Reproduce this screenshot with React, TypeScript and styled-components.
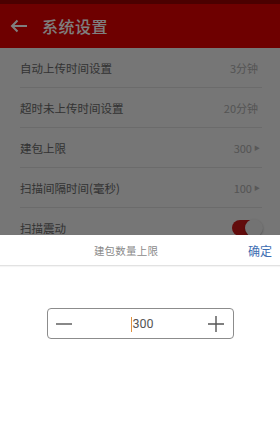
import React from "react";
import styled, { createGlobalStyle } from "styled-components";

const Global = createGlobalStyle`
  html, body { margin: 0; padding: 0; }
  body { font-family: "Noto Sans CJK SC", "Noto Sans", sans-serif; width: 280px; height: 446px; overflow: hidden; }
`;

const Page = styled.div`
  position: relative;
  width: 280px;
  height: 446px;
  background: #ececec;
  overflow: hidden;
`;

const StatusBar = styled.div`
  height: 4px;
  background: #960000;
`;

const Header = styled.div`
  height: 44px;
  background: #dc0000;
  display: flex;
  align-items: center;
  padding-left: 10px;
  gap: 14px;
`;

const Title = styled.div`
  color: #fff;
  font-size: 16px;
  font-weight: 500;
  letter-spacing: 0.5px;
`;

const List = styled.div`
  display: flex;
  flex-direction: column;
`;

const Row = styled.div`
  height: 40px;
  margin-left: 20px;
  margin-right: 18px;
  display: flex;
  align-items: center;
  justify-content: space-between;
  border-bottom: 1px solid #d6d6d6;
  box-sizing: border-box;
  &:last-child { border-bottom: none; }
`;

const Label = styled.span`
  font-size: 11.5px;
  color: #666;
`;

const Value = styled.span<{ $arrow?: boolean }>`
  font-size: 11px;
  color: #a8a8a8;
  display: flex;
  align-items: center;
  gap: 2px;
  padding-right: ${(p) => (p.$arrow ? 2 : 4)}px;
`;

const Tri = styled.span`
  font-size: 6px;
  color: #b0b0b0;
`;

const Switch = styled.div`
  width: 30px;
  height: 16px;
  border-radius: 8px;
  background: #c41818;
  position: relative;
`;

const Thumb = styled.div`
  position: absolute;
  right: -1px;
  top: -1px;
  width: 18px;
  height: 18px;
  border-radius: 50%;
  background: #e6e6e6;
  box-shadow: 0 1px 2px rgba(0,0,0,0.3);
`;

const Dim = styled.div`
  position: absolute;
  inset: 0;
  background: rgba(0, 0, 0, 0.5);
`;

const Sheet = styled.div`
  position: absolute;
  left: 0;
  right: 0;
  top: 235px;
  bottom: 0;
  background: #fff;
  display: flex;
  flex-direction: column;
`;

const SheetHead = styled.div`
  height: 30px;
  display: flex;
  align-items: center;
  border-bottom: 1px solid #e2e2e2;
  box-shadow: 0 1px 1px rgba(0,0,0,0.04);
`;

const SheetTitle = styled.span`
  flex: 1;
  text-align: center;
  padding-left: 8px;
  font-size: 10.5px;
  color: #8a8a8a;
  letter-spacing: 0.2px;
`;

const Confirm = styled.span`
  margin-right: 8px;
  margin-left: 4px;
  font-size: 12px;
  color: #3d6db2;
`;

const StepWrap = styled.div`
  display: flex;
  justify-content: center;
  padding-top: 42px;
`;

const Stepper = styled.div`
  width: 187px;
  height: 31px;
  box-sizing: border-box;
  border: 1px solid #8c8c8c;
  border-radius: 4px;
  display: flex;
  align-items: center;
  justify-content: space-between;
  padding: 0 7px 0 7px;
`;

const StepBtn = styled.svg`
  width: 18px;
  height: 18px;
  display: block;
`;

const Num = styled.span`
  font-family: "Roboto", "Noto Sans", sans-serif;
  font-size: 12.5px;
  color: #555;
  position: relative;
  margin-left: 6px;
`;

const Caret = styled.span`
  position: absolute;
  left: -1px;
  top: 1px;
  width: 1px;
  height: 15px;
  background: #e0913f;
`;

const rows: { label: string; value?: string; arrow?: boolean; toggle?: boolean }[] = [
  { label: "自动上传时间设置", value: "3分钟" },
  { label: "超时未上传时间设置", value: "20分钟" },
  { label: "建包上限", value: "300", arrow: true },
  { label: "扫描间隔时间(毫秒)", value: "100", arrow: true },
  { label: "扫描震动", toggle: true },
];

export default function App() {
  return (
    <Page>
      <Global />
      <StatusBar />
      <Header>
        <svg width="18" height="14" viewBox="0 0 18 14">
          <path d="M17 7H2M7.5 1.5L2 7l5.5 5.5" stroke="#fff" strokeWidth="2" fill="none" />
        </svg>
        <Title>系统设置</Title>
      </Header>
      <List>
        {rows.map((r) => (
          <Row key={r.label}>
            <Label>{r.label}</Label>
            {r.toggle ? (
              <Switch>
                <Thumb />
              </Switch>
            ) : (
              <Value $arrow={r.arrow}>
                {r.value}
                {r.arrow && <Tri>▶</Tri>}
              </Value>
            )}
          </Row>
        ))}
      </List>
      <Dim />
      <Sheet>
        <SheetHead>
          <SheetTitle>建包数量上限</SheetTitle>
          <Confirm>确定</Confirm>
        </SheetHead>
        <StepWrap>
          <Stepper>
            <StepBtn viewBox="0 0 18 18">
              <path d="M1 9h16" stroke="#555" strokeWidth="1.4" />
            </StepBtn>
            <Num>
              <Caret />
              300
            </Num>
            <StepBtn viewBox="0 0 18 18">
              <path d="M1 9h16M9 1v16" stroke="#555" strokeWidth="1.4" />
            </StepBtn>
          </Stepper>
        </StepWrap>
      </Sheet>
    </Page>
  );
}
